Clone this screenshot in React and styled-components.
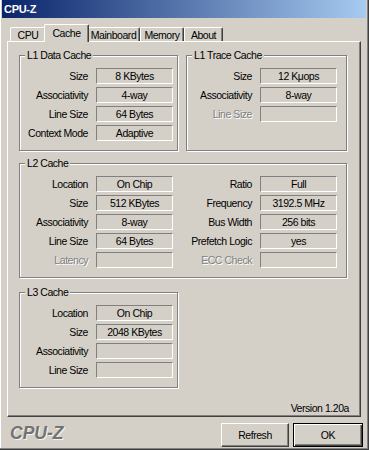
import React from 'react';
import styled, { createGlobalStyle } from 'styled-components';

const GlobalStyle = createGlobalStyle`
  html, body {
    margin: 0;
    padding: 0;
    background: #d4d0c8;
  }
  body {
    font-family: "Liberation Sans", Arial, sans-serif;
    font-size: 10.5px;
    letter-spacing: -0.45px;
    color: #000;
  }
`;

const Window = styled.div`
  box-sizing: border-box;
  width: 369px;
  height: 450px;
  display: flex;
  flex-direction: column;
  background: #d4d0c8;
  padding: 0 2px 2px 2px;
  border-right: 1px solid #404040;
  border-bottom: 1px solid #404040;
  box-shadow: inset -1px -1px 0 #808080, inset 1px 0 0 #fff;
`;

const TitleBar = styled.div`
  height: 18px;
  flex: none;
  display: flex;
  align-items: center;
  padding-left: 2px;
  background: linear-gradient(to right, #0a246a, #a6caf0);
  color: #fff;
  font-weight: bold;
  font-size: 11px;
  letter-spacing: -0.3px;
`;

const TabStrip = styled.div`
  display: flex;
  align-items: flex-end;
  height: 17px;
  margin-top: 6px;
  padding-left: 8px;
  flex: none;
`;

const Tab = styled.div`
  box-sizing: border-box;
  position: relative;
  width: ${(p) => (p.$active ? p.$w + 4 : p.$w)}px;
  height: ${(p) => (p.$active ? 18 : 14)}px;
  margin: ${(p) => (p.$active ? '0 -2px -1px' : '0')};
  z-index: ${(p) => (p.$active ? 2 : 0)};
  display: flex;
  align-items: center;
  justify-content: center;
  padding-bottom: ${(p) => (p.$active ? 2 : 0)}px;
  background: #d4d0c8;
  border-top: 1px solid #fff;
  border-left: 1px solid #fff;
  border-right: 1px solid #404040;
  border-radius: 2px 2px 0 0;
  box-shadow: inset -1px 0 0 #808080;
`;

const Panel = styled.div`
  box-sizing: border-box;
  height: 376px;
  margin: 0 5px;
  flex: none;
  display: flex;
  flex-direction: column;
  padding: 13px 11px 1px 11px;
  border-top: 1px solid #fff;
  border-left: 1px solid #fff;
  border-right: 1px solid #404040;
  border-bottom: 1px solid #404040;
  box-shadow: inset -1px -1px 0 #808080;
`;

const TopRow = styled.div`
  display: flex;
  gap: 8px;
`;

const GroupBox = styled.div`
  box-sizing: border-box;
  position: relative;
  width: ${(p) => p.$width}px;
  margin-top: ${(p) => p.$top || 0}px;
  border: 1px solid #808080;
  box-shadow: inset 1px 1px 0 #fff, 1px 1px 0 #fff;
`;

const GroupTitle = styled.span`
  position: absolute;
  top: -7px;
  left: 5px;
  padding: 0 2px;
  line-height: 13px;
  background: #d4d0c8;
`;

const FieldGrid = styled.div`
  display: grid;
  grid-template-columns: ${(p) => p.$cols};
  column-gap: 8px;
  row-gap: 3px;
  padding: 12px 0 9px;
`;

const Label = styled.div`
  text-align: right;
  line-height: 16px;
  white-space: nowrap;
  color: ${(p) => (p.$disabled ? '#808080' : '#000')};
  text-shadow: ${(p) => (p.$disabled ? '1px 1px 0 #fff' : 'none')};
`;

const Value = styled.div`
  box-sizing: border-box;
  height: 16px;
  line-height: 14px;
  text-align: center;
  white-space: nowrap;
  border-top: 1px solid #808080;
  border-left: 1px solid #808080;
  border-bottom: 1px solid #fff;
  border-right: 1px solid #fff;
`;

const Version = styled.div`
  margin-top: auto;
  align-self: flex-end;
  line-height: 13px;
`;

const Footer = styled.div`
  flex: 1;
  display: flex;
  align-items: flex-end;
  padding: 0 3px 0 8px;
  gap: 4px;
`;

const Logo = styled.div`
  align-self: center;
  margin-right: auto;
  font-size: 17.5px;
  font-weight: bold;
  font-style: italic;
  letter-spacing: 0;
  color: #737373;
  text-shadow: 1px 1px 0 #f4f4f4;
  padding-top: 3px;
`;

const Button = styled.button`
  box-sizing: border-box;
  width: ${(p) => p.$w}px;
  height: 24px;
  padding: 0;
  font-family: inherit;
  font-size: 10.5px;
  letter-spacing: -0.45px;
  color: #000;
  background: #d4d0c8;
  border-top: 1px solid ${(p) => (p.$default ? '#000' : '#fff')};
  border-left: 1px solid ${(p) => (p.$default ? '#000' : '#fff')};
  border-right: 1px solid ${(p) => (p.$default ? '#000' : '#404040')};
  border-bottom: 1px solid ${(p) => (p.$default ? '#000' : '#404040')};
  box-shadow: ${(p) =>
    p.$default
      ? 'inset 1px 1px 0 #fff, inset -1px -1px 0 #404040, inset -2px -2px 0 #808080'
      : 'inset -1px -1px 0 #808080'};
`;

const tabs = [
  { name: 'CPU', w: 36 },
  { name: 'Cache', w: 41, active: true },
  { name: 'Mainboard', w: 53 },
  { name: 'Memory', w: 44 },
  { name: 'About', w: 39 },
];

function Field({ label, value, disabled }) {
  return (
    <>
      <Label $disabled={disabled}>{label}</Label>
      <Value>{value}</Value>
    </>
  );
}

function Group({ title, width, top, cols, fields }) {
  return (
    <GroupBox $width={width} $top={top}>
      <GroupTitle>{title}</GroupTitle>
      <FieldGrid $cols={cols}>
        {fields.map((f, i) => (
          <Field key={i} {...f} />
        ))}
      </FieldGrid>
    </GroupBox>
  );
}

export default function App() {
  return (
    <Window>
      <GlobalStyle />
      <TitleBar>CPU-Z</TitleBar>
      <TabStrip>
        {tabs.map((t) => (
          <Tab key={t.name} $w={t.w} $active={t.active}>
            {t.name}
          </Tab>
        ))}
      </TabStrip>
      <Panel>
        <TopRow>
          <Group
            title="L1 Data Cache"
            width={159}
            cols="68px 77px"
            fields={[
              { label: 'Size', value: '8 KBytes' },
              { label: 'Associativity', value: '4-way' },
              { label: 'Line Size', value: '64 Bytes' },
              { label: 'Context Mode', value: 'Adaptive' },
            ]}
          />
          <Group
            title="L1 Trace Cache"
            width={161}
            cols="65px 77px"
            fields={[
              { label: 'Size', value: '12 Kμops' },
              { label: 'Associativity', value: '8-way' },
              { label: 'Line Size', value: '', disabled: true },
            ]}
          />
        </TopRow>
        <Group
          title="L2 Cache"
          width={328}
          top={12}
          cols="68px 77px 71px 77px"
          fields={[
            { label: 'Location', value: 'On Chip' },
            { label: 'Ratio', value: 'Full' },
            { label: 'Size', value: '512 KBytes' },
            { label: 'Frequency', value: '3192.5 MHz' },
            { label: 'Associativity', value: '8-way' },
            { label: 'Bus Width', value: '256 bits' },
            { label: 'Line Size', value: '64 Bytes' },
            { label: 'Prefetch Logic', value: 'yes' },
            { label: 'Latency', value: '', disabled: true },
            { label: 'ECC Check', value: '', disabled: true },
          ]}
        />
        <Group
          title="L3 Cache"
          width={159}
          top={14}
          cols="68px 77px"
          fields={[
            { label: 'Location', value: 'On Chip' },
            { label: 'Size', value: '2048 KBytes' },
            { label: 'Associativity', value: '' },
            { label: 'Line Size', value: '' },
          ]}
        />
        <Version>Version 1.20a</Version>
      </Panel>
      <Footer>
        <Logo>CPU-Z</Logo>
        <Button $w={68}>Refresh</Button>
        <Button $w={70} $default>
          OK
        </Button>
      </Footer>
    </Window>
  );
}
